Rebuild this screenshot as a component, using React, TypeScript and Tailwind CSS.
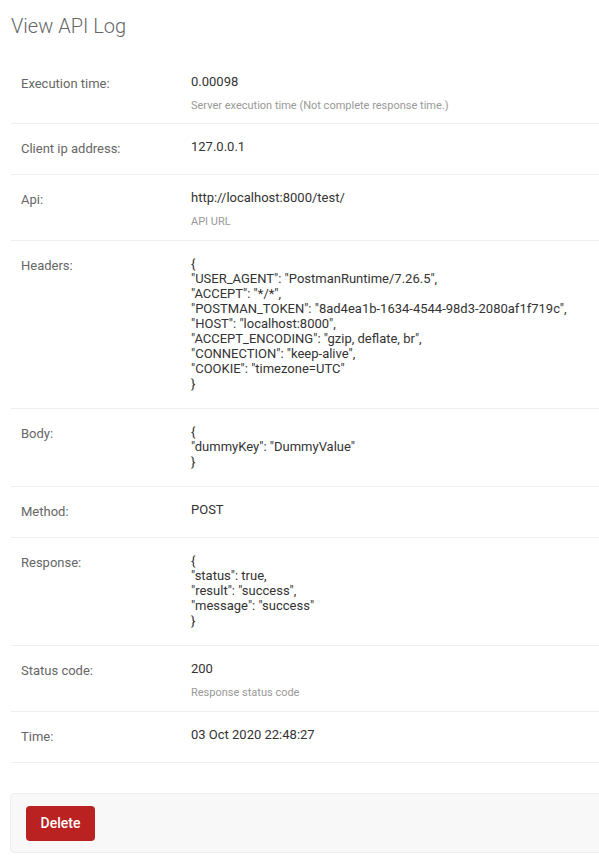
import React from "react";

type Row = { label: string; value: string[]; help?: string; json?: boolean };

const rows: Row[] = [
  { label: "Execution time:", value: ["0.00098"], help: "Server execution time (Not complete response time.)" },
  { label: "Client ip address:", value: ["127.0.0.1"] },
  { label: "Api:", value: ["http://localhost:8000/test/"], help: "API URL" },
  {
    label: "Headers:",
    json: true,
    value: [
      "{",
      '"USER_AGENT": "PostmanRuntime/7.26.5",',
      '"ACCEPT": "*/*",',
      '"POSTMAN_TOKEN": "8ad4ea1b-1634-4544-98d3-2080af1f719c",',
      '"HOST": "localhost:8000",',
      '"ACCEPT_ENCODING": "gzip, deflate, br",',
      '"CONNECTION": "keep-alive",',
      '"COOKIE": "timezone=UTC"',
      "}",
    ],
  },
  { label: "Body:", json: true, value: ["{", '"dummyKey": "DummyValue"', "}"] },
  { label: "Method:", value: ["POST"] },
  {
    label: "Response:",
    json: true,
    value: ["{", '"status": true,', '"result": "success",', '"message": "success"', "}"],
  },
  { label: "Status code:", value: ["200"], help: "Response status code" },
  { label: "Time:", value: ["03 Oct 2020 22:48:27"] },
];

export default function App() {
  return (
    <div
      className="min-h-[858px] w-[599px] overflow-hidden bg-white pl-[11px]"
      style={{ fontFamily: "Roboto, 'Liberation Sans', sans-serif" }}
    >
      <h1 className="pt-[14px] text-[20px] font-light leading-[24px] text-[#666]">View API Log</h1>
      <div className="mt-[21px] w-[620px]">
        {rows.map((r, i) => (
          <div
            key={i}
            className={
              "flex border-b border-[#eee] pl-[10px] pt-[15px] text-[13px] " +
              (r.help ? (i === 0 ? "pb-[10px]" : "pb-[11px]") : r.json ? "pb-[17px]" : "pb-[17px]")
            }
          >
            <div className="w-[170px] shrink-0 pt-[2px] leading-[16px] text-[#666]">{r.label}</div>
            <div className="text-[#333]">
              {r.value.map((l, j) => (
                <div key={j} className={r.json ? "leading-[15px]" : "leading-[16px]"}>
                  {l}
                </div>
              ))}
              {r.help && <div className="mt-[9px] text-[11px] leading-[14px] text-[#999]">{r.help}</div>}
            </div>
          </div>
        ))}
      </div>
      <div className="mt-[30px] w-[620px] -ml-[1px] rounded-[4px] border border-[#eee] bg-[#f8f8f8] px-[15px] pt-[12px] pb-[11px]">
        <button className="h-[35px] w-[69px] rounded-[4px] bg-[#ba2121] text-[14px] font-medium text-white">
          Delete
        </button>
      </div>
    </div>
  );
}
